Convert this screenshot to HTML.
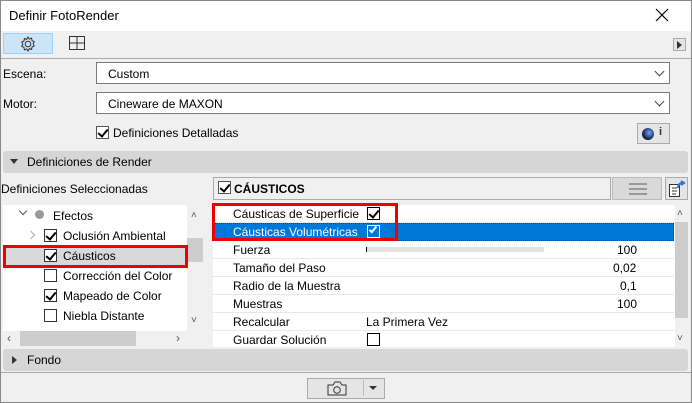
<!DOCTYPE html>
<html><head><meta charset="utf-8"><style>
*{box-sizing:border-box;margin:0;padding:0}
body{width:692px;height:403px;overflow:hidden;background:#f0f0f0;font-family:"Liberation Sans",sans-serif;font-size:12px;color:#000;position:relative}
.a{position:absolute}
.cb{position:absolute;width:13px;height:13px;border:1px solid #333;background:#fff}
.cb.c::after{content:"";position:absolute;left:3px;top:0px;width:4px;height:8px;border:solid #000;border-width:0 2px 2px 0;transform:rotate(40deg)}
.dd{position:absolute;background:#fff;border:1px solid #7a7a7a;height:22px}
.dd span{position:absolute;left:11px;top:4px}
.dd i{position:absolute;right:6px;top:5px;width:7px;height:7px;border:solid #444;border-width:0 1px 1px 0;transform:rotate(45deg)}
.row{position:absolute;left:213px;width:461px;height:18px;border-bottom:1px solid #e8e8e8;background:#fff}
.row span{position:absolute;left:20px;top:2px}
.row b{position:absolute;font-weight:normal;top:2px}
</style></head><body>
<div class="a" style="left:0;top:0;width:692px;height:403px;border:1px solid #888"></div>
<div class="a" style="left:1px;top:1px;width:690px;height:30px;background:#fff"></div>
<div class="a" style="left:9px;top:8px;font-size:13px">Definir FotoRender</div>
<svg class="a" style="left:655px;top:8px" width="14" height="14"><path d="M1 1l12 12M13 1L1 13" stroke="#000" stroke-width="1.2"/></svg>
<div class="a" style="left:1px;top:58px;width:690px;height:1px;background:#aaa"></div>
<div class="a" style="left:3px;top:33px;width:50px;height:21px;background:#cce4f7;border:1px solid #99d1ff"></div>
<svg class="a" style="left:19px;top:35px" width="18" height="18" viewBox="0 0 18 18"><circle cx="9" cy="9" r="2.8" fill="none" stroke="#333"/><path d="M9 2l1.3 2 2.3-.8.4 2.4 2.2 1-1 2.2 1 2.2-2.2 1-.4 2.4-2.3-.8L9 16l-1.3-2-2.3.8-.4-2.4-2.2-1 1-2.2-1-2.2 2.2-1 .4-2.4 2.3.8z" fill="none" stroke="#333"/></svg>
<svg class="a" style="left:69px;top:36px" width="17" height="15"><rect x=".5" y=".5" width="15" height="13" fill="none" stroke="#333"/><path d="M8 1v12M1 7h14" stroke="#333"/></svg>
<div class="a" style="left:673px;top:38px;width:13px;height:13px;border:1px solid #aaa;background:#e5e5e5"></div>
<div class="a" style="left:677px;top:41px;border-left:5px solid #333;border-top:4px solid transparent;border-bottom:4px solid transparent"></div>
<div class="a" style="left:3px;top:67px">Escena:</div>
<div class="dd" style="left:96px;top:62px;width:574px"><span>Custom</span><i></i></div>
<div class="a" style="left:3px;top:97px">Motor:</div>
<div class="dd" style="left:96px;top:92px;width:574px"><span>Cineware de MAXON</span><i></i></div>
<div class="cb c" style="left:96px;top:126px;border-color:#555"></div>
<div class="a" style="left:113px;top:126px">Definiciones Detalladas</div>
<div class="a" style="left:637px;top:123px;width:33px;height:21px;border:1px solid #aaa;background:#e5e5e5"></div>
<div class="a" style="left:642px;top:128px;width:12px;height:12px;border-radius:50%;background:radial-gradient(circle at 60% 40%,#6af,#113 70%)"></div>
<div class="a" style="left:659px;top:126px;font-weight:bold;font-size:11px;color:#333">i</div>
<div class="a" style="left:3px;top:151px;width:685px;height:22px;background:#d6d6d6;border-radius:3px"></div>
<div class="a" style="left:10px;top:159px;border-top:5px solid #333;border-left:4px solid transparent;border-right:4px solid transparent"></div>
<div class="a" style="left:27px;top:155px">Definiciones de Render</div>
<div class="a" style="left:1px;top:182px">Definiciones Seleccionadas</div>
<div class="a" style="left:213px;top:177px;width:398px;height:23px;border:1px solid #aaa;background:#f0f0f0"></div>
<div class="cb c" style="left:218px;top:181px;border-color:#555"></div>
<div class="a" style="left:234px;top:182px;font-weight:bold">CÁUSTICOS</div>
<div class="a" style="left:612px;top:177px;width:50px;height:23px;border:1px solid #bbb;background:#d9d9d9"></div>
<div class="a" style="left:629px;top:183px;width:18px;height:2px;background:#999;box-shadow:0 5px #999,0 10px #999"></div>
<div class="a" style="left:665px;top:177px;width:23px;height:23px;border:1px solid #aaa;background:#e5e5e5"></div>
<svg class="a" style="left:668px;top:180px" width="18" height="18"><rect x="1.5" y="4.5" width="10" height="12" fill="#fff" stroke="#333"/><path d="M4 8h5M4 11h5M4 14h4" stroke="#333"/><path d="M10 8q0-5 5-5M13 1l3 2-3 2" fill="none" stroke="#1e7be0" stroke-width="2"/></svg>
<div class="a" style="left:3px;top:205px;width:184px;height:126px;background:#fff"></div>
<div class="a" style="left:187px;top:205px;width:16px;height:126px;background:#f0f0f0"></div>
<div class="a" style="left:187px;top:238px;width:16px;height:24px;background:#cdcdcd"></div>
<div class="a" style="left:191px;top:210px;font-size:10px;color:#555">˄</div>
<div class="a" style="left:191px;top:315px;font-size:10px;color:#555">˅</div>
<div class="a" style="left:3px;top:331px;width:200px;height:15px;background:#f0f0f0"></div>
<div class="a" style="left:20px;top:331px;width:116px;height:15px;background:#cdcdcd"></div>
<div class="a" style="left:7px;top:331px;color:#555">‹</div>
<div class="a" style="left:176px;top:331px;color:#555">›</div>
<div class="a" style="left:20px;top:208px;width:6px;height:6px;border:solid #555;border-width:0 1.5px 1.5px 0;transform:rotate(45deg)"></div>
<div class="a" style="left:35px;top:210px;width:9px;height:9px;border-radius:50%;background:#999"></div>
<div class="a" style="left:53px;top:209px">Efectos</div>
<div class="a" style="left:28px;top:232px;width:6px;height:6px;border:solid #aaa;border-width:1.5px 1.5px 0 0;transform:rotate(45deg)"></div>
<div class="cb c" style="left:44px;top:229px"></div>
<div class="a" style="left:63px;top:229px">Oclusión Ambiental</div>
<div class="a" style="left:5px;top:246px;width:181px;height:20px;background:#d9d9d9"></div>
<div class="cb c" style="left:44px;top:249px"></div>
<div class="a" style="left:63px;top:249px">Cáusticos</div>
<div class="a" style="left:3px;top:245px;width:185px;height:23px;border:3px solid #e00"></div>
<div class="cb" style="left:44px;top:269px"></div>
<div class="a" style="left:63px;top:269px">Corrección del Color</div>
<div class="cb c" style="left:44px;top:289px"></div>
<div class="a" style="left:63px;top:289px">Mapeado de Color</div>
<div class="cb" style="left:44px;top:309px"></div>
<div class="a" style="left:63px;top:309px">Niebla Distante</div>
<div class="a" style="left:213px;top:205px;width:475px;height:142px;background:#fff"></div>
<div class="row" style="top:205px"><span>Cáusticas de Superficie</span></div>
<div class="cb c" style="left:367px;top:207px;border-width:1.5px;border-color:#000"></div>
<div class="row" style="top:223px;background:#0078d7;color:#fff;border:1px dotted #333"><span style="left:19px;top:1px">Cáusticas Volumétricas</span></div>
<div class="a" style="left:367px;top:225px;width:13px;height:13px;border:1px solid #fff"></div>
<div class="a" style="left:371px;top:225px;width:4px;height:8px;border:solid #fff;border-width:0 2px 2px 0;transform:rotate(40deg)"></div>
<div class="row" style="top:241px"><span>Fuerza</span><b style="left:404px">100</b></div>
<div class="a" style="left:366px;top:247px;width:178px;height:5px;background:#e3e3e3;border-left:1px solid #000"></div>
<div class="row" style="top:259px"><span>Tamaño del Paso</span><b style="left:400px">0,02</b></div>
<div class="row" style="top:277px"><span>Radio de la Muestra</span><b style="left:407px">0,1</b></div>
<div class="row" style="top:295px"><span>Muestras</span><b style="left:404px">100</b></div>
<div class="row" style="top:313px"><span>Recalcular</span><b style="left:153px">La Primera Vez</b></div>
<div class="row" style="top:331px;height:16px;border:0"><span>Guardar Solución</span></div>
<div class="cb" style="left:367px;top:333px;border-color:#000"></div>
<div class="a" style="left:212px;top:203px;width:186px;height:38px;border:3px solid #e00"></div>
<div class="a" style="left:675px;top:205px;width:13px;height:142px;background:#f0f0f0"></div>
<div class="a" style="left:675px;top:222px;width:13px;height:96px;background:#cdcdcd"></div>
<div class="a" style="left:677px;top:208px;font-size:10px;color:#555">˄</div>
<div class="a" style="left:677px;top:333px;font-size:10px;color:#555">˅</div>
<div class="a" style="left:3px;top:349px;width:685px;height:22px;background:#d6d6d6;border-radius:3px"></div>
<div class="a" style="left:12px;top:356px;border-left:5px solid #333;border-top:4px solid transparent;border-bottom:4px solid transparent"></div>
<div class="a" style="left:27px;top:353px">Fondo</div>
<div class="a" style="left:1px;top:372px;width:690px;height:1px;background:#aaa"></div>
<div class="a" style="left:307px;top:378px;width:78px;height:21px;border:1px solid #aaa;background:#e5e5e5"></div>
<svg class="a" style="left:326px;top:380px" width="22" height="17"><path d="M2 5h5l2-3h5l2 3h4v10H2z" fill="none" stroke="#333"/><circle cx="11" cy="10" r="3.3" fill="none" stroke="#333"/></svg>
<div class="a" style="left:363px;top:380px;width:1px;height:16px;background:#bbb"></div>
<div class="a" style="left:369px;top:386px;border-top:4px solid #333;border-left:4px solid transparent;border-right:4px solid transparent"></div>
</body></html>
